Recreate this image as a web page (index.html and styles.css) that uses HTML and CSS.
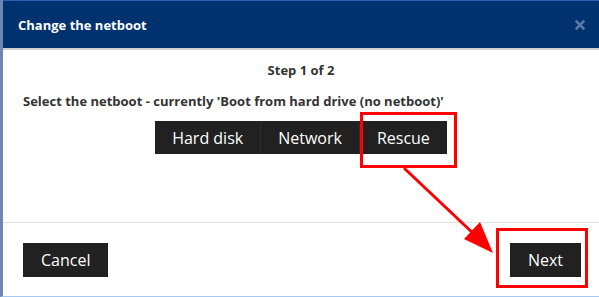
FILE: index.html
```html
<!DOCTYPE html>
<html>
<head>
<meta charset="utf-8">
<link rel="stylesheet" href="styles.css">
</head>
<body>
<div class="frame">
  <div class="modal">
    <div class="modal-header">
      <h1 class="title">Change the netboot</h1>
      <svg class="close" width="10" height="10" viewBox="0 0 10 10"><path d="M1.5 1.5 L8.5 8.5 M8.5 1.5 L1.5 8.5" stroke="#5a77a8" stroke-width="2.6" stroke-linecap="square"/></svg>
    </div>
    <div class="modal-body">
      <p class="step">Step 1 of 2</p>
      <p class="select">Select the netboot - currently 'Boot from hard drive (no netboot)'</p>
      <div class="choices">
        <button class="btn seg">Hard disk</button>
        <button class="btn seg">Network</button>
        <button class="btn seg">Rescue</button>
      </div>
    </div>
    <div class="modal-footer">
      <button class="btn cancel">Cancel</button>
      <button class="btn next">Next</button>
    </div>
  </div>
  <svg class="annot" width="599" height="297" viewBox="0 0 599 297">
    <rect x="361.5" y="113.5" width="94" height="53" fill="none" stroke="#ff0000" stroke-width="3"/>
    <rect x="497.5" y="229.5" width="89" height="57" fill="none" stroke="#ff0000" stroke-width="3"/>
    <line x1="404" y1="168" x2="476" y2="236" stroke="#ff0000" stroke-width="3"/>
    <polygon points="493,253 464,239 480,222" fill="#ff0000"/>
  </svg>
</div>
</body>
</html>
```
FILE: styles.css
```css
* { box-sizing: border-box; }
html, body { margin: 0; padding: 0; }
body {
  width: 599px;
  height: 297px;
  overflow: hidden;
  font-family: "Open Sans", "DejaVu Sans", sans-serif;
  background: #fff;
}
.frame {
  position: relative;
  width: 599px;
  height: 297px;
  border-left: 3px solid #6f86b0;
  border-bottom: 1px solid #a8c8f0;
}
.modal {
  display: flex;
  flex-direction: column;
  height: 296px;
  background: #fff;
}
.modal-header {
  height: 50px;
  background: #00326f;
  border-top: 1px solid #2f5fae;
  border-bottom: 2px solid #d0d0d0;
  display: flex;
  align-items: center;
  justify-content: space-between;
  padding: 0 14px 0 15px;
}
.title {
  margin: 0;
  color: #fff;
  font-size: 13px;
  font-weight: 700;
}
.close {
  display: block;
}
.modal-body {
  height: 173px;
  border-bottom: 1px solid #e3e3e3;
  padding: 11px 20px 0;
  display: flex;
  flex-direction: column;
}
.step {
  margin: 0;
  text-align: center;
  font-size: 13px;
  font-weight: 700;
  color: #333;
  line-height: 18px;
}
.select {
  margin: 13px 0 0;
  font-size: 13px;
  font-weight: 700;
  color: #333;
  line-height: 18px;
}
.choices {
  margin-top: 11px;
  display: flex;
  justify-content: center;
}
.btn {
  font-family: inherit;
  border: none;
  background: #212121;
  color: #fff;
  font-size: 16px;
  line-height: 20px;
  cursor: pointer;
}
.seg {
  height: 33px;
  padding: 0 17px;
  border-right: 1px solid #2c2c2c;
}
.seg:last-child { border-right: none; }
.modal-footer {
  flex: 1;
  display: flex;
  align-items: center;
  justify-content: space-between;
  padding: 0 18px 0 20px;
}
.cancel, .next {
  height: 34px;
  padding: 0 18px;
}
.annot {
  position: absolute;
  left: -3px;
  top: 0;
  pointer-events: none;
}
```
